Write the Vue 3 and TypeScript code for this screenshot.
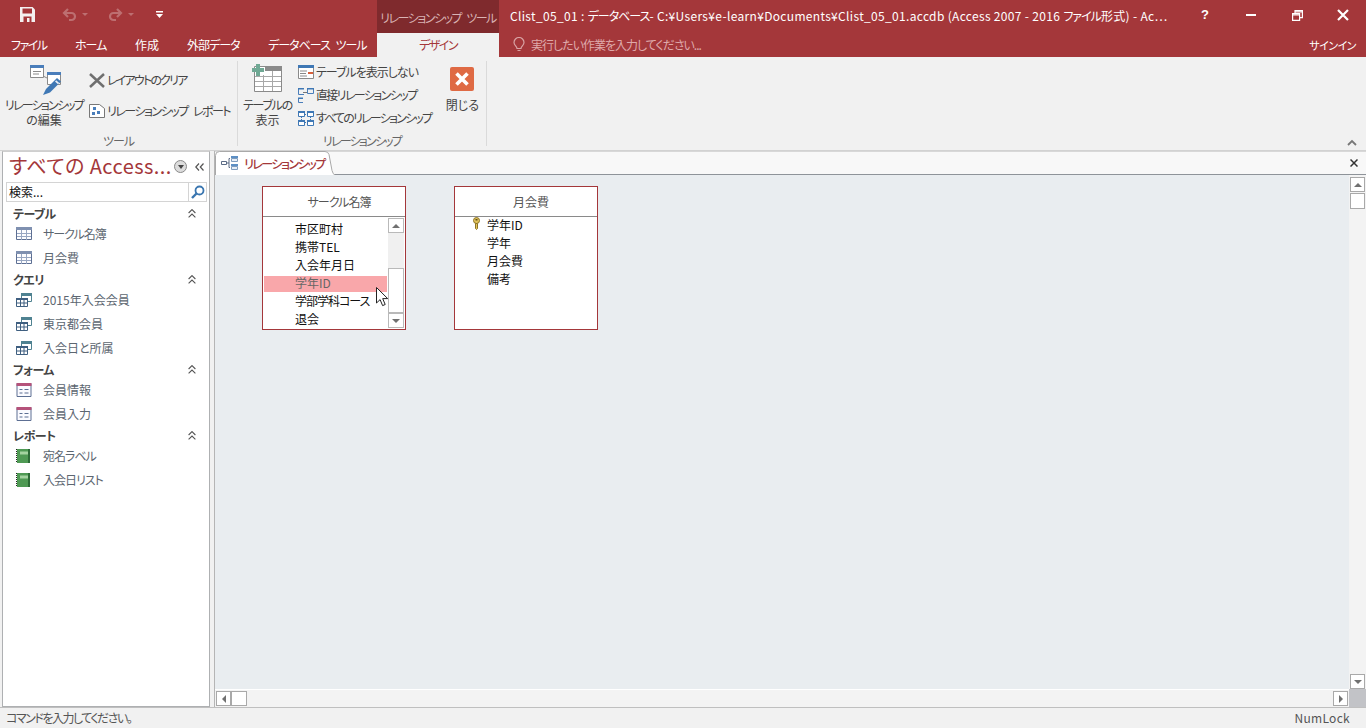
<script setup lang="ts">
interface NavItem { name: string; kind: 'table' | 'query' | 'form' | 'report'; tight?: boolean }
interface NavGroup { title: string; items: NavItem[] }

const tabs = [
  { label: 'ファイル', w: 64, tight: 'k15' },
  { label: 'ホーム', w: 60, tight: 'k1' },
  { label: '作成', w: 52, tight: '' },
  { label: '外部データ', w: 81, tight: 'k1' },
  { label: 'データベース ツール', w: 120, tight: 'k1 spaced' },
]

const groups: NavGroup[] = [
  { title: 'テーブル', items: [{ name: 'サークル名簿', kind: 'table', tight: true }, { name: '月会費', kind: 'table' }] },
  { title: 'クエリ', items: [{ name: '2015年入会会員', kind: 'query' }, { name: '東京都会員', kind: 'query' }, { name: '入会日と所属', kind: 'query' }] },
  { title: 'フォーム', items: [{ name: '会員情報', kind: 'form' }, { name: '会員入力', kind: 'form' }] },
  { title: 'レポート', items: [{ name: '宛名ラベル', kind: 'report', tight: true }, { name: '入会日リスト', kind: 'report', tight: true }] },
]

const leftFields = ['市区町村', '携帯TEL', '入会年月日', '学年ID', '学部学科コース', '退会']
const rightFields = ['学年ID', '学年', '月会費', '備考']
</script>

<template>
  <div class="app">
    <header class="titlebar">
      <div class="qat">
        <svg class="save" width="15" height="15" viewBox="0 0 15 15"><path fill="#f4f0f0" d="M0 0h12.500L15 2.500V15H0z"/><path fill="#a4373a" d="M2.500 1.500h9.500v5H2.500zM3.500 9.500h8V15h-8z"/><path fill="#f4f0f0" d="M7 11h2.500v4H7z"/></svg>
        <svg class="undo" width="15" height="14" viewBox="0 0 15 14"><path fill="none" stroke="#bd6f71" stroke-width="2.200" d="M6 1 2 5l4 4M2 5h7.500a3.500 3.500 0 0 1 0 7H7"/></svg>
        <span class="tri dim"></span>
        <svg class="redo" width="15" height="14" viewBox="0 0 15 14"><path fill="none" stroke="#bd6f71" stroke-width="2.200" d="m9 1 4 4-4 4M13 5H5.500a3.500 3.500 0 0 0 0 7H8"/></svg>
        <span class="tri dim"></span>
        <svg class="custom" width="7" height="7" viewBox="0 0 7 7"><path fill="#fff" d="M0 0h7v1.500H0zM0 3h7L3.500 7z"/></svg>
      </div>
      <div class="context k15 spaced">リレーションシップ ツール</div>
      <div class="wintitle">Clist_05_01 : <span class="k1">データベース</span>- C:¥Users¥e-learn¥Documents¥Clist_05_01.accdb (Access 2007 - 2016 <span class="k1">ファイル</span>形式) - Ac…</div>
      <div class="winbtns">
        <span class="winbtn help">?</span>
        <span class="winbtn"><svg width="10" height="10" viewBox="0 0 10 10"><path fill="#fff" d="M0 4h10v2H0z"/></svg></span>
        <span class="winbtn"><svg width="11" height="11" viewBox="0 0 11 11"><path fill="none" stroke="#fff" stroke-width="1.200" d="M.6 3.600h7v6.800h-7zM3 3.500V.6h7.400v7H8"/><path stroke="#fff" stroke-width="1.200" d="M.6 4.800h7M3 1.800h7.400"/></svg></span>
        <span class="winbtn"><svg width="12" height="12" viewBox="0 0 12 12"><path stroke="#fff" stroke-width="2.200" d="m1 1 10 10M11 1 1 11"/></svg></span>
      </div>
    </header>

    <nav class="tabbar">
      <span v-for="t in tabs" :key="t.label" class="tab" :class="t.tight" :style="{ width: t.w + 'px' }">{{ t.label }}</span>
      <span class="tab active k15">デザイン</span>
      <div class="tell">
        <svg width="12" height="16" viewBox="0 0 12 16"><path fill="none" stroke="#d9a3a4" stroke-width="1.200" d="M4 11.500C4 9 1 8.500 1 5.500a5 5 0 0 1 10 0C11 8.500 8 9 8 11.500zM4.500 13.500h3"/></svg>
        <span class="k1">実行したい作業を入力してください...</span>
      </div>
      <span class="signin">サインイン</span>
    </nav>

    <section class="ribbon">
      <div class="group g1">
        <div class="gbody">
          <div class="big b-edit">
            <svg width="32" height="30" viewBox="0 0 32 30">
              <path fill="#fff" stroke="#8a8a8a" d="M.5.500h13v12H.5z"/><path fill="#4a7ebb" d="M0 0h14v3H0z"/>
              <path stroke="#8a8a8a" d="M3 6.500h8M3 9h6"/>
              <path stroke="#8a8a8a" d="M13 11l4 2"/>
              <path fill="#fff" stroke="#8a8a8a" d="M17.500 7.500h13v12h-13z"/><path fill="#4a7ebb" d="M17 7h14v3H17z"/>
              <path fill="#3f78b5" d="m16 24 11-11 4 3.500-11 11L13 30z"/><path fill="#e9eef5" d="m25 16.500 1.200-1.200 3 2.800-1.200 1.200z"/>
            </svg>
            <span class="k18">リレーションシップ<br><span class="k0">の編集</span></span>
          </div>
          <div class="smalls s1">
            <div class="small"><svg width="16" height="15" viewBox="0 0 16 15"><path stroke="#6f6f6f" stroke-width="2.500" d="m1 1 14 13M15 1 1 14"/></svg><span class="k18">レイアウトのクリア</span></div>
            <div class="small"><svg width="16" height="14" viewBox="0 0 16 14"><path fill="#fff" stroke="#777" d="M.5.500h10l5 4v9H.5z"/><path fill="#4a7ebb" d="M4 3h3v3H4zM8 7h3v3H8zM3 8h3v3H3z"/></svg><span class="k15 spaced">リレーションシップ レポート</span></div>
          </div>
        </div>
        <div class="glabel k1">ツール</div>
      </div>
      <div class="group g2">
        <div class="gbody">
          <div class="big b-show">
            <svg width="31" height="28" viewBox="0 0 31 28">
              <path fill="#fff" stroke="#8a8a8a" d="M2.500 2.500h27v25h-27z"/><path fill="#8a8a8a" d="M13 2h17v5H13z"/>
              <path stroke="#a8a8a8" d="M3 12.500h26M3 17.500h26M3 22.500h26M11.500 11v16M20.500 7v20"/>
              <path fill="#6fa894" d="M4 0h4v4h4v4H8v4H4V8H0V4h4z"/>
            </svg>
            <span class="k13">テーブルの<br><span class="k0">表示</span></span>
          </div>
          <div class="smalls s2">
            <div class="small"><svg width="16" height="14" viewBox="0 0 16 14"><path fill="#fff" stroke="#8a8a8a" d="M.5.500h15v13H.5z"/><path fill="#3f78b5" d="M0 0h16v3H0z"/><path stroke="#8a8a8a" d="M2 6h7M2 8.500h6M2 11h7"/><path fill="#d9603b" d="M10 7h5v2h-5z"/></svg><span class="k1">テーブルを表示しない</span></div>
            <div class="small"><svg width="16" height="15" viewBox="0 0 16 15"><path fill="none" stroke="#4a7ebb" d="M6 .500H.5v6H6M9.500.500h6v5h-6zM5 10.500H.5v4H5"/><path fill="#3f78b5" d="M0 0h6v1.500H0zM9 0h7v1.500H9zM0 9.500h5V11H0z"/><path stroke="#777" d="M5 4.500h4"/></svg><span class="tight1">直接リレーションシップ</span></div>
            <div class="small"><svg width="16" height="15" viewBox="0 0 16 15"><path fill="#fff" stroke="#3f78b5" d="M.5.500h6v5h-6zM9.500.500h6v5h-6zM.5 9.500h6v5h-6zM9.500 9.500h6v5h-6z"/><path fill="#3f78b5" d="M0 0h7v2H0zM9 0h7v2H9zM0 9h7v2H0zM9 9h7v2H9z"/><path stroke="#3f78b5" stroke-dasharray="1 1" d="M7 3.500h2M7 11.500h2M3.500 6v3M12.500 6v3"/></svg><span class="k18">すべてのリレーションシップ</span></div>
          </div>
          <div class="big b-close">
            <svg width="24" height="24" viewBox="0 0 24 24"><rect width="24" height="24" rx="2" fill="#df6a44"/><path stroke="#fff" stroke-width="3.600" d="m6.500 6.500 11 11M17.500 6.500l-11 11"/></svg>
            <span>閉じる</span>
          </div>
        </div>
        <div class="glabel k18">リレーションシップ</div>
      </div>
      <svg class="collapse" width="10" height="7" viewBox="0 0 10 7"><path fill="none" stroke="#777" stroke-width="1.800" d="m1 6 4-4 4 4"/></svg>
    </section>

    <main class="workspace">
      <aside class="nav">
        <div class="navhead">
          <span class="navtitle">すべての Access...</span>
          <span class="navdrop"><i></i></span>
          <svg class="navshut" width="9" height="8" viewBox="0 0 9 8"><path fill="none" stroke="#555" stroke-width="1.200" d="M4 .5.800 4 4 7.500M8.500.5 5.300 4l3.200 3.500"/></svg>
        </div>
        <div class="search">
          <span>検索...</span>
          <span class="lens"><svg width="14" height="14" viewBox="0 0 14 14"><circle cx="8.500" cy="5.500" r="4" fill="none" stroke="#3a76b0" stroke-width="1.800"/><path stroke="#3a76b0" stroke-width="2.400" d="M5.500 8.500 1 13"/></svg></span>
        </div>
        <div v-for="g in groups" :key="g.title" class="navgroup">
          <div class="navheading">
            <b>{{ g.title }}</b>
            <svg width="8" height="9" viewBox="0 0 8 9"><path fill="none" stroke="#555" stroke-width="1.100" d="m.6 4 3.400-3.400L7.400 4M.6 8.400 4 5l3.400 3.400"/></svg>
          </div>
          <div v-for="it in g.items" :key="it.name" class="navrow">
            <svg v-if="it.kind === 'table'" width="16" height="14" viewBox="0 0 16 14"><path fill="#fdfdff" stroke="#5d6f93" d="M.5.500h15v12H.5z"/><path fill="#7f90b0" d="M0 0h16v3H0z"/><path stroke="#98a7c2" d="M1 6.500h14M1 9.500h14M5.500 3v10M10.500 3v10"/></svg>
            <svg v-else-if="it.kind === 'query'" width="16" height="14" viewBox="0 0 16 14"><path fill="#fff" stroke="#4f8291" d="M5.500.500h10v8h-10z"/><path fill="#4f8291" d="M5 0h11v3H5z"/><path fill="#fff" stroke="#3f5f80" d="M.5 5.500h11v8H.5z"/><path fill="#3f5f80" d="M0 5h12v2H0z"/><path stroke="#3f5f80" d="M1 10h10M4.500 7v6M8 7v6"/></svg>
            <svg v-else-if="it.kind === 'form'" width="16" height="14" viewBox="0 0 15 14"><path fill="#fbfbff" stroke="#5d6f93" d="M.5.500h14v13H.5z"/><path fill="#b5527a" d="M0 0h15v3H0z"/><path stroke="#5d6f93" d="M3 6.500h3M3 10h3M8 6.500h4M8 10h4"/></svg>
            <svg v-else width="16" height="14" viewBox="0 0 16 14"><path fill="#4f9a54" d="M1 0h13v14H1z"/><path fill="#a4d3a0" d="M4 2.500h8v3H4z"/><path fill="#2d6b37" d="M12 0h2v14h-2z"/><path stroke="#222" stroke-dasharray="1 1" d="M.5 0v14"/></svg>
            <span :class="{ k1: it.tight }">{{ it.name }}</span>
          </div>
        </div>
      </aside>
      <div class="doc">
        <div class="docstrip">
          <div class="doctab">
            <svg class="tabshape" width="120" height="24" viewBox="0 0 120 24"><path fill="#fff" stroke="#a9a9a9" d="M.5 24V4.500Q.5.500 4.500.500H110q3 0 4 3l3 16q1 4 3 4.500"/></svg>
            <svg class="tabicon" width="17" height="15" viewBox="0 0 17 15"><path fill="#fff" stroke="#5b6b85" d="M.5 5.500h5v3h-5z"/><path fill="none" stroke="#5b6b85" d="M6 7h2V2.500h1M8 7v4.500h1"/><path fill="#5c8fc4" d="M10 0h7v2h-7zM10 8h7v2h-7z"/><path fill="#e6eef7" stroke="#7f9cbd" d="M10.500 2.500h6v3h-6zM10.500 10.500h6v3h-6z"/></svg>
            <span class="tablabel k15">リレーションシップ</span>
          </div>
          <svg class="docclose" width="8" height="8" viewBox="0 0 8 8"><path stroke="#333" stroke-width="1.500" d="m.5.500 7 7M7.500.500l-7 7"/></svg>
        </div>
        <div class="docbody">
          <div class="canvas">
            <div class="tbl left">
              <div class="tblhead k1">サークル名簿</div>
              <div class="fields">
                <div v-for="f in leftFields" :key="f" class="field" :class="{ hit: f === '学年ID', k1: f === '学部学科コース' }">{{ f }}</div>
              </div>
              <div class="minisb">
                <span class="arrowbtn"><i class="up"></i></span>
                <span class="minitrack"><span class="minithumb"></span></span>
                <span class="arrowbtn"><i class="down"></i></span>
              </div>
            </div>
            <div class="tbl right">
              <div class="tblhead">月会費</div>
              <div class="fields">
                <div v-for="f in rightFields" :key="f" class="field keyed">
                  <svg v-if="f === '学年ID'" class="key" width="9" height="13" viewBox="0 0 9 13"><circle cx="4.500" cy="3.500" r="3" fill="#e2c35a" stroke="#8d7426"/><path fill="#e2c35a" stroke="#8d7426" d="M3.500 6.500h2v5l-1 1-1-1z"/><path fill="#5f4f18" d="M3.500 2h2v1.500h-2z"/></svg>
                  {{ f }}
                </div>
              </div>
            </div>
            <svg class="cursor" width="13" height="20" viewBox="0 0 13 20"><path fill="#fff" stroke="#222" d="M.5.500v15.500l3.600-3.400 2.500 6 2.600-1.100-2.500-5.900h5z"/></svg>
          </div>
          <div class="vbar">
            <span class="sbbtn"><i class="up"></i></span>
            <span class="sbthumb"></span>
            <span class="sbspace"></span>
            <span class="sbbtn"><i class="down"></i></span>
          </div>
          <div class="hbar">
            <span class="sbbtn"><i class="lft"></i></span>
            <span class="sbthumb h"></span>
            <span class="sbspace"></span>
            <span class="sbbtn"><i class="rgt"></i></span>
          </div>
          <div class="corner"></div>
        </div>
      </div>
    </main>

    <footer class="status">
      <span class="k15">コマンドを入力してください。</span>
      <span class="numlock">NumLock</span>
    </footer>
  </div>
</template>

<style>
html, body { margin: 0; padding: 0; background: #f1f1f1; }
</style>

<style scoped>
.app {
  width: 1366px; height: 728px; overflow: hidden; display: flex; flex-direction: column;
  background: #f1f1f1; color: #444;
  font-family: "Noto Sans CJK JP", "Noto Sans", sans-serif; font-size: 12px; line-height: 16px;
  font-feature-settings: "palt";
}
.k0 { letter-spacing: 0; }
.k1 { letter-spacing: -1px; }
.k13 { letter-spacing: -1.3px; }
.k15 { letter-spacing: -1.5px; }
.k18 { letter-spacing: -1.8px; }
.tight1 { letter-spacing: -1.6px; }
.spaced { word-spacing: 4px; }

.titlebar { height: 33px; flex: none; display: flex; background: #a4373a; color: #fff; }
.qat { width: 377px; flex: none; display: flex; align-items: flex-start; padding-left: 20px; box-sizing: border-box; }
.save { margin-top: 7px; }
.undo { margin: 8px 0 0 27px; }
.redo { margin: 8px 0 0 20px; }
.custom { margin: 11px 0 0 22px; }
.tri { width: 0; height: 0; border: 3px solid transparent; border-top: 3px solid #fff; margin: 13px 0 0 5px; }
.tri.dim { border-top-color: #bd6f71; }
.context { width: 122px; flex: none; box-sizing: border-box; background: #7f2a2d; color: #d9b3b4; text-align: center; padding-top: 10px; white-space: nowrap; overflow: hidden; }
.wintitle { width: 672px; flex: none; padding: 8px 0 0 11px; box-sizing: border-box; white-space: nowrap; overflow: hidden; font-size: 12px; color: #fff; letter-spacing: .33px; }
.winbtns { margin-left: auto; display: flex; }
.winbtn { width: 46px; height: 30px; display: flex; align-items: center; justify-content: center; }
.help { font-weight: 700; font-size: 13px; font-family: "Liberation Sans", sans-serif; }

.tabbar { height: 24px; flex: none; display: flex; align-items: stretch; background: #a4373a; color: #fff; }
.tab { box-sizing: border-box; padding-left: 11px; padding-top: 4px; white-space: nowrap; }
.tab.active { width: 122px; background: #f1f1f1; color: #a4373a; text-align: center; padding: 4px 0 0; }
.tell { display: flex; gap: 6px; align-items: flex-start; padding: 4px 0 0 14px; color: #dfa9aa; }
.signin { margin-left: auto; padding: 4px 10px 0 0; font-size: 11px; letter-spacing: -.5px; }

.ribbon { height: 94px; flex: none; position: relative; display: flex; background: #f1f1f1; border-bottom: 1px solid #d2d2d2; box-sizing: border-box; padding-top: 4px; color: #444; }
.group { display: flex; flex-direction: column; border-right: 1px solid #dadada; height: 85px; box-sizing: border-box; }
.g1 { width: 238px; }
.g2 { width: 249px; }
.gbody { flex: 1; display: flex; min-height: 0; }
.glabel { text-align: center; height: 14px; line-height: 18px; font-size: 12px; color: #666; }
.big { display: flex; flex-direction: column; align-items: center; text-align: center; line-height: 15px; white-space: nowrap; }
.big svg, .small svg { flex: none; }
.b-edit { width: 88px; padding-top: 4px; gap: 2px; }
.b-edit svg { margin-left: 4px; }
.b-show { width: 60px; padding-top: 3px; gap: 5px; }
.b-close { width: 48px; padding-top: 6px; gap: 6px; margin-left: -3px; }
.smalls { display: flex; flex-direction: column; }
.s1 { gap: 15px; padding-top: 11px; margin-left: 1px; }
.s2 { gap: 7px; padding-top: 3px; margin-left: 1px; width: 144px; flex: none; }
.small { display: flex; align-items: center; gap: 2px; height: 16px; white-space: nowrap; }
.collapse { position: absolute; right: 9px; top: 82px; }

.workspace { flex: 1; min-height: 0; display: flex; }
.nav { width: 208px; margin-left: 2px; flex: none; box-sizing: border-box; background: #fff; border-left: 1px solid #aeb0b2; border-right: 1px solid #aeb0b2; border-bottom: 1px solid #aeb0b2; border-top: 1px solid #cfcfcf; color: #5a5a5a; }
.navhead { height: 28px; display: flex; align-items: center; padding-left: 6px; position: relative; }
.navtitle { font-size: 20px; color: #a4373a; white-space: nowrap; line-height: 28px; letter-spacing: .45px; }
.navdrop { position: absolute; left: 171px; top: 8px; width: 13px; height: 13px; border-radius: 50%; background: #dcdcdc; border: 1px solid #8a8a8a; box-sizing: border-box; display: flex; align-items: center; justify-content: center; }
.navdrop i { width: 0; height: 0; border: 3px solid transparent; border-top: 4px solid #444; margin-top: 3px; }
.navshut { position: absolute; left: 192px; top: 11px; }
.search { margin: 2px 2px 2px 3px; height: 20px; box-sizing: border-box; border: 1px solid #d4d4d4; display: flex; align-items: center; justify-content: space-between; padding-left: 2px; color: #111; }
.lens { width: 17px; height: 18px; border-left: 1px solid #d4d4d4; display: flex; align-items: center; justify-content: center; }
.navheading { height: 18px; box-sizing: border-box; padding: 1px 13px 0 10px; display: flex; align-items: center; justify-content: space-between; color: #444; }
.navheading b { font-weight: 700; letter-spacing: -.5px; }
.navrow { height: 24px; display: flex; align-items: center; gap: 11px; padding-left: 13px; color: #5c6670; white-space: nowrap; }
.navrow svg { flex: none; }

.doc { flex: 1; display: flex; flex-direction: column; margin-left: 4px; border-left: 1px solid #b5b5b5; min-width: 0; }
.docstrip { height: 24px; flex: none; box-sizing: border-box; background: #f8f8f8; border-top: 1px solid #d8d8d8; border-bottom: 1px solid #8e9399; display: flex; align-items: flex-end; position: relative; }
.doctab { display: flex; align-items: center; width: 120px; height: 23px; margin-bottom: -1px; padding-left: 6px; box-sizing: border-box; position: relative; color: #a4373a; font-weight: 500; white-space: nowrap; }
.tabshape { position: absolute; left: 0; top: -1px; }
.tabicon { position: relative; flex: none; }
.tablabel { position: relative; margin-left: 6px; }
.docclose { position: absolute; right: 8px; top: 7px; }

.docbody { flex: 1; min-height: 0; display: grid; grid-template-columns: 1fr 17px; grid-template-rows: 1fr 18px; background: #e9edf0; }
.canvas { position: relative; overflow: hidden; }
.tbl { position: absolute; top: 11px; width: 144px; height: 144px; box-sizing: border-box; background: #fff; border: 1px solid #a4373a; color: #111; }
.tbl.left { left: 47px; }
.tbl.right { left: 239px; }
.tblhead { height: 29px; line-height: 29px; text-align: center; color: #555; border-bottom: 1px solid #8a8a8a; padding-left: 10px; }
.left .fields { padding-top: 3px; width: 124px; }
.field { height: 18px; line-height: 18px; padding-left: 32px; white-space: nowrap; position: relative; }
.left .field { margin-left: 1px; padding-left: 31px; }
.left .hit { background: #f9a7aa; background-clip: padding-box; border-top: 2px solid transparent; box-sizing: border-box; color: #666; line-height: 14px; }
.right .field { top: -1px; }
.key { position: absolute; left: 17px; top: 1px; }
.minisb { position: absolute; right: 1px; top: 31px; width: 16px; height: 110px; display: flex; flex-direction: column; background: #f0f0f0; }
.arrowbtn { height: 15px; flex: none; box-sizing: border-box; border: 1px solid #b9b9b9; background: #fff; display: flex; align-items: center; justify-content: center; }
.minitrack { flex: 1; display: flex; align-items: flex-end; }
.minithumb { display: block; width: 100%; height: 45px; box-sizing: border-box; background: #fff; border: 1px solid #b9b9b9; }
.cursor { position: absolute; left: 161px; top: 112px; }

i.up, i.down, i.lft, i.rgt { width: 0; height: 0; border: 4px solid transparent; display: block; }
i.up { border-bottom: 4px solid #707070; border-top-width: 0; }
i.down { border-top: 4px solid #707070; border-bottom-width: 0; }
i.lft { border-right: 4px solid #707070; border-left-width: 0; }
i.rgt { border-left: 4px solid #707070; border-right-width: 0; }

.vbar { background: #f3f3f3; display: flex; flex-direction: column; align-items: center; padding-top: 2px; box-sizing: border-box; }
.sbbtn { flex: none; box-sizing: border-box; width: 15px; height: 15px; border: 1px solid #a9a9a9; background: #fff; display: flex; align-items: center; justify-content: center; }
.sbthumb { flex: none; width: 15px; height: 16px; box-sizing: border-box; border: 1px solid #a9a9a9; background: #fff; margin-top: 1px; }
.sbspace { flex: 1; }
.hbar { background: #f3f3f3; display: flex; align-items: center; padding: 0 1px; border-top: 1px solid #fff; box-sizing: border-box; }
.hbar .sbthumb { margin: 0; width: 16px; height: 15px; }
.corner { background: #c2c3c7; }

.status { height: 21px; flex: none; box-sizing: border-box; border-top: 1px solid #bfbfbf; display: flex; justify-content: space-between; align-items: center; padding: 0 16px 0 6px; color: #555; background: #f1f1f1; }
.numlock { letter-spacing: .3px; }
</style>
